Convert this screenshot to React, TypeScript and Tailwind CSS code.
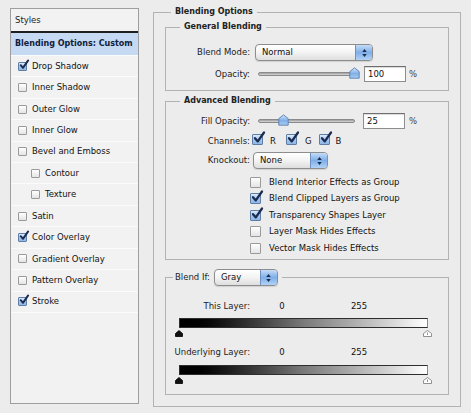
import React from 'react';

type StyleItem = { name: string; on?: boolean; sub?: boolean };

const STYLE_ITEMS: StyleItem[] = [
  { name: 'Drop Shadow', on: true },
  { name: 'Inner Shadow' },
  { name: 'Outer Glow' },
  { name: 'Inner Glow' },
  { name: 'Bevel and Emboss' },
  { name: 'Contour', sub: true },
  { name: 'Texture', sub: true },
  { name: 'Satin' },
  { name: 'Color Overlay', on: true },
  { name: 'Gradient Overlay' },
  { name: 'Pattern Overlay' },
  { name: 'Stroke', on: true },
];

const ADVANCED_OPTIONS: StyleItem[] = [
  { name: 'Blend Interior Effects as Group' },
  { name: 'Blend Clipped Layers as Group', on: true },
  { name: 'Transparency Shapes Layer', on: true },
  { name: 'Layer Mask Hides Effects' },
  { name: 'Vector Mask Hides Effects' },
];

// Aqua style checkbox, the tick overflows the box like on the Mac
const Check: React.FC<{ on?: boolean; small?: boolean }> = ({ on, small }) => (
  <span
    className={`relative inline-block shrink-0 rounded-[1px] border ${
      small ? 'w-[9px] h-[9px]' : 'w-[11px] h-[11px]'
    } ${
      on
        ? 'border-[#5f7ea6] bg-linear-to-b from-[#dcebfb] via-[#a9c8ee] to-[#8fb6e6]'
        : 'border-[#9a9a9a] bg-linear-to-b from-white to-[#e4e4e4]'
    }`}
  >
    {on && (
      <svg
        viewBox="0 0 12 12"
        className={`absolute overflow-visible ${small ? '-top-[3px] left-0 w-[10px] h-[10px]' : '-top-[3px] left-0 w-[12px] h-[12px]'}`}
      >
        <path d="M2 6.2 L4.8 9.4 L11 0.5" fill="none" stroke="#1b2c52" strokeWidth="2.3" strokeLinecap="round" strokeLinejoin="round" />
      </svg>
    )}
  </span>
);

const PopUp: React.FC<{ label: string; className: string }> = ({ label, className }) => (
  <div
    className={`flex h-[17px] shrink-0 rounded-[4px] border border-[#8d8d8d] bg-linear-to-b from-white via-[#f3f3f3] to-[#dedede] shadow-[0_1px_1px_rgba(0,0,0,0.12)] ${className}`}
  >
    <span className="flex-1 pl-[6px] leading-[15px] text-[#111]">{label}</span>
    <span className="flex w-[17px] flex-col items-center justify-center gap-[2px] rounded-r-[3px] border-l border-[#7090c0] bg-linear-to-b from-[#c4dcf8] via-[#7eaee8] to-[#b2d2f6]">
      <svg viewBox="0 0 6 4" className="w-[5px] h-[3px]">
        <path d="M3 0 L6 4 L0 4 Z" fill="#1c2c4c" />
      </svg>
      <svg viewBox="0 0 6 4" className="w-[5px] h-[3px]">
        <path d="M0 0 L6 0 L3 4 Z" fill="#1c2c4c" />
      </svg>
    </span>
  </div>
);

const Slider: React.FC<{ thumbClass: string }> = ({ thumbClass }) => (
  <div className="relative flex h-[16px] w-[97px] shrink-0 items-center">
    <div className="h-[4px] w-full rounded-full border border-[#8a8a8a] bg-linear-to-b from-[#9c9c9c] to-[#dadada]" />
    <svg viewBox="0 0 11 12" className={`absolute top-[1px] w-[11px] h-[12px] ${thumbClass}`}>
      <defs>
        <linearGradient id="thumbGrad" x1="0" y1="0" x2="0" y2="1">
          <stop offset="0" stopColor="#d6e7fb" />
          <stop offset="0.55" stopColor="#80b0e8" />
          <stop offset="1" stopColor="#a9cdf5" />
        </linearGradient>
      </defs>
      <path d="M5.5 0.8 L10.2 4.6 V11.2 H0.8 V4.6 Z" fill="url(#thumbGrad)" stroke="#5a7db0" strokeWidth="0.9" strokeLinejoin="round" />
    </svg>
  </div>
);

const NumberBox: React.FC<{ value: string }> = ({ value }) => (
  <div className="h-[16px] w-[42px] shrink-0 border border-[#8e8e8e] border-t-[#6e6e6e] bg-white pl-[3px] leading-[14px] text-[#111] shadow-[inset_0_1px_1px_rgba(0,0,0,0.15)]">
    {value}
  </div>
);

const GradientBar: React.FC = () => (
  <div className="ml-[13px] w-[249px]">
    <div className="h-[10px] border border-[#2e2e2e] border-r-[#8a8a8a] bg-linear-to-r from-black via-[#7a7a7a] to-white" />
    <div className="-mx-[4px] mt-[2px] flex h-[7px] justify-between">
      <svg viewBox="0 0 8 7" className="w-[8px] h-[7px]">
        <path d="M4 0.5 L7.5 3.5 V6.5 H0.5 V3.5 Z" fill="#111" stroke="#000" strokeWidth="0.8" strokeLinejoin="round" />
      </svg>
      <svg viewBox="0 0 9 7" className="w-[9px] h-[7px]">
        <path d="M4.5 0.5 L8.5 3.5 V6.5 H0.5 V3.5 Z" fill="#fff" stroke="#777" strokeWidth="0.8" strokeLinejoin="round" />
        <path d="M4.5 2.5 V5" stroke="#777" strokeWidth="0.8" />
      </svg>
    </div>
  </div>
);

const Label: React.FC<{ children: React.ReactNode }> = ({ children }) => (
  <span className="w-[84px] shrink-0 text-right text-[#222]">{children}</span>
);

export default function App() {
  return (
    <div className="flex h-[413px] w-[471px] items-start overflow-hidden bg-[#ececec] font-['DejaVu_Sans',sans-serif] text-[8.5px] text-[#111]">
      {/* Styles list */}
      <div className="ml-[10px] mt-[8px] flex h-[396px] w-[129px] shrink-0 flex-col border border-[#9e9e9e] bg-[#f2f2f2]">
        <div className="flex h-[22px] items-center pl-[4px] text-[#222]">Styles</div>
        <div className="h-[2px] bg-[#1e1e1e]" />
        <div className="flex h-[22px] items-center bg-[#c6d9f2] pl-[4px] text-[8px] font-bold text-[#10203a]">
          Blending Options: Custom
        </div>
        <div className="grid h-[257px] grid-rows-12">
          {STYLE_ITEMS.map((item) => (
            <div
              key={item.name}
              className={`flex items-center gap-[5px] border-t border-[#fbfbfb] ${item.sub ? 'pl-[20px]' : 'pl-[7px]'}`}
            >
              <Check on={item.on} small />
              <span>{item.name}</span>
            </div>
          ))}
        </div>
        <div className="border-t border-[#fbfbfb]" />
      </div>

      {/* Blending Options */}
      <fieldset className="ml-[14px] mt-[6px] h-[401px] w-[306px] shrink-0 border border-[#b2b2b2] px-[11px]">
        <legend className="ml-[6px] px-[4px] text-[8px] font-bold leading-[12px] text-[#222]">Blending Options</legend>

        {/* General Blending */}
        <fieldset className="mt-[3px] flex h-[70px] w-[284px] flex-col border border-[#b2b2b2]">
          <legend className="ml-[14px] px-[4px] text-[8px] font-bold leading-[12px] text-[#222]">General Blending</legend>
          <div className="mt-[11px] flex h-[17px] items-center">
            <Label>Blend Mode:</Label>
            <PopUp label="Normal" className="ml-[5px] w-[118px]" />
          </div>
          <div className="mt-[5px] flex h-[16px] items-center">
            <Label>Opacity:</Label>
            <div className="ml-[8px]">
              <Slider thumbClass="left-[91px]" />
            </div>
            <div className="ml-[9px]">
              <NumberBox value="100" />
            </div>
            <span className="ml-[3px] text-[#444]">%</span>
          </div>
        </fieldset>

        {/* Advanced Blending */}
        <fieldset className="mt-[4px] flex h-[165px] w-[284px] flex-col border border-[#b2b2b2]">
          <legend className="ml-[14px] px-[4px] text-[8px] font-bold leading-[12px] text-[#222]">Advanced Blending</legend>
          <div className="mt-[6px] flex h-[16px] items-center">
            <Label>Fill Opacity:</Label>
            <div className="ml-[8px]">
              <Slider thumbClass="left-[20px]" />
            </div>
            <div className="ml-[8px]">
              <NumberBox value="25" />
            </div>
            <span className="ml-[4px] text-[#444]">%</span>
          </div>
          <div className="mt-[4px] flex h-[16px] items-center">
            <Label>Channels:</Label>
            <span className="ml-[2px]"><Check on /></span>
            <span className="ml-[7px]">R</span>
            <span className="ml-[10px]"><Check on /></span>
            <span className="ml-[8px]">G</span>
            <span className="ml-[7px]"><Check on /></span>
            <span className="ml-[6px]">B</span>
          </div>
          <div className="mt-[3px] flex h-[17px] items-center">
            <Label>Knockout:</Label>
            <PopUp label="None" className="ml-[3px] w-[75px]" />
          </div>
          <div className="mt-[5px] flex flex-col">
            {ADVANCED_OPTIONS.map((opt) => (
              <div key={opt.name} className="flex h-[16.5px] items-center pl-[84px]">
                <Check on={opt.on} />
                <span className="ml-[8px]">{opt.name}</span>
              </div>
            ))}
          </div>
        </fieldset>

        {/* Blend If */}
        <fieldset className="mt-[9px] flex h-[126px] w-[284px] flex-col border border-[#b2b2b2]">
          <legend className="ml-[7px] flex items-center px-[2px]">
            <span className="text-[#222]">Blend If:</span>
            <PopUp label="Gray" className="ml-[4px] mr-[2px] w-[64px]" />
          </legend>
          <div className="mt-[14px] flex h-[12px] items-center">
            <Label>This Layer:</Label>
            <span className="ml-[22px] w-[20px] text-center">0</span>
            <span className="ml-[57px] w-[20px] text-center">255</span>
          </div>
          <div className="mt-[6px]">
            <GradientBar />
          </div>
          <div className="mt-[9px] flex h-[12px] items-center">
            <Label>Underlying Layer:</Label>
            <span className="ml-[22px] w-[20px] text-center">0</span>
            <span className="ml-[57px] w-[20px] text-center">255</span>
          </div>
          <div className="mt-[7px]">
            <GradientBar />
          </div>
        </fieldset>
      </fieldset>
    </div>
  );
}
